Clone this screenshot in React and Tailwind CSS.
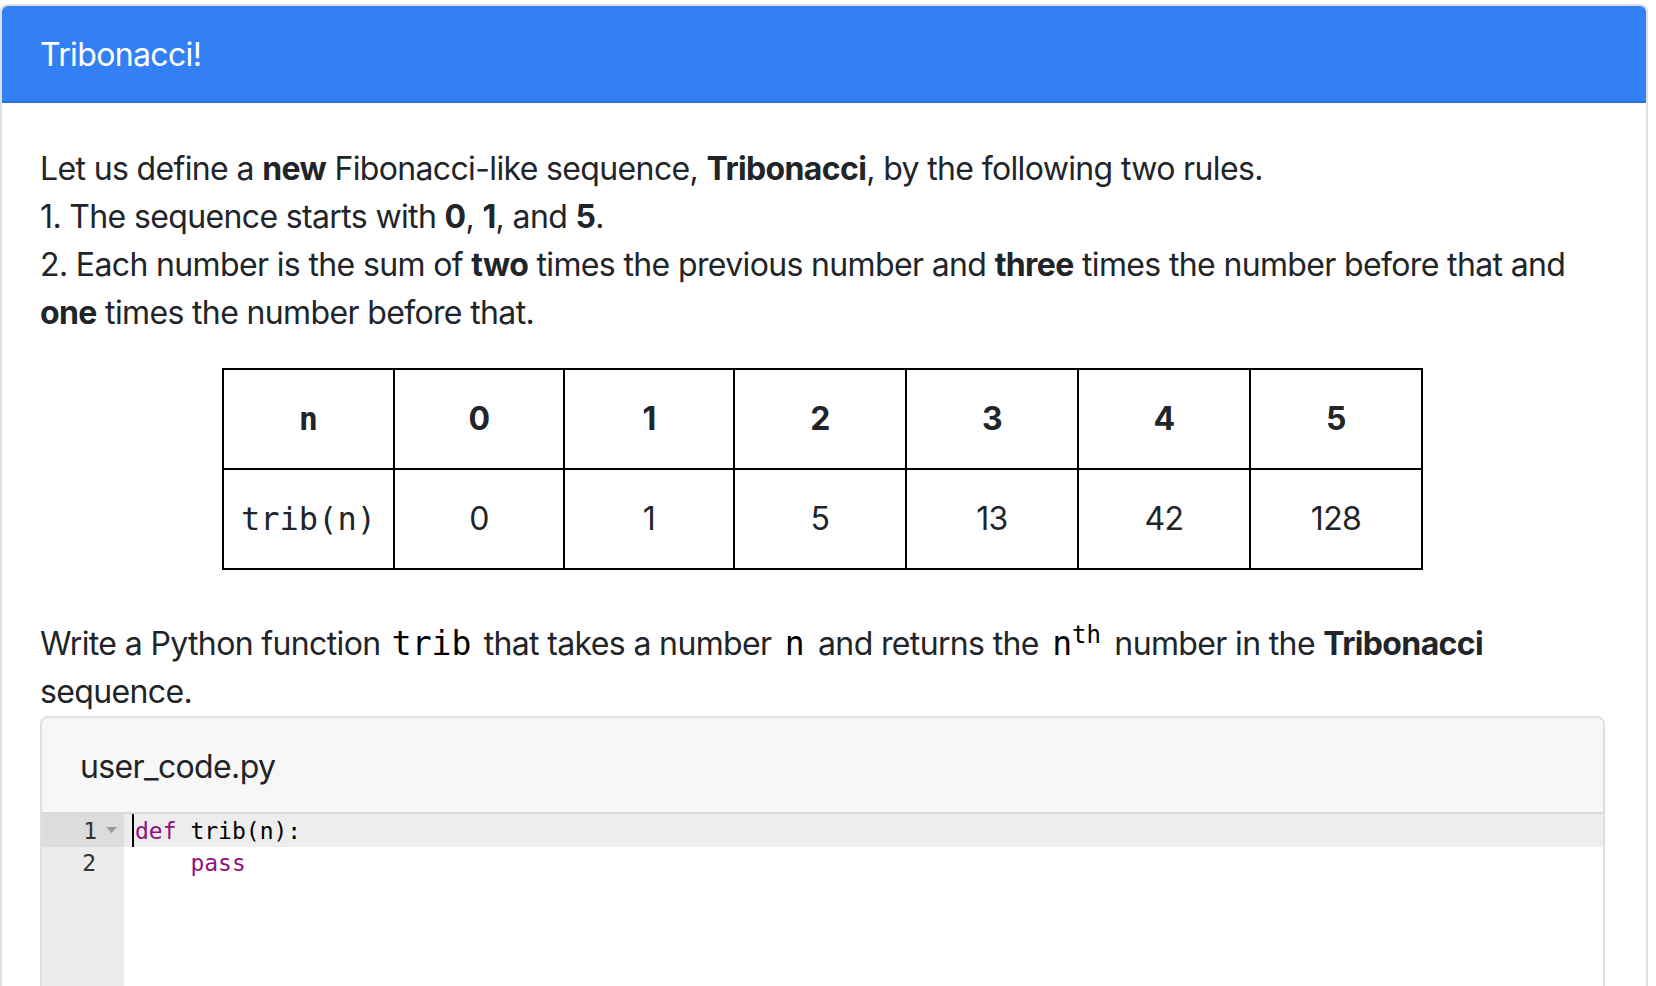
const SANS = { fontFamily: 'Inter, "Liberation Sans", sans-serif' }
const MONO = { fontFamily: '"DejaVu Sans Mono", monospace' }

const TRIB = [0, 1, 5, 13, 42, 128]
const COLS = [171, 170, 170, 172, 172, 172, 172]

function FoldArrow(){
  return (
    <svg width="11" height="7" viewBox="0 0 11 7" className="ml-[9px] mr-[7px]">
      <path d="M0 0 L11 0 L5.5 6 Z" fill="#9a9a9a" />
    </svg>
  )
}

function Code({ children, className = '' }){
  return <code className={`text-[33px] tracking-normal text-black ${className}`} style={MONO}>{children}</code>
}

export default function App(){
  return (
    <div className="pt-[4px] bg-white text-[#212529] tracking-[-0.64px]" style={SANS}>
      <div className="w-[1648px] border-2 border-[#dfdfdf] rounded-t-[8px] overflow-hidden">
        {/* card header */}
        <div className="h-[97px] bg-[#3380f5] border-b-2 border-[#2c6fd6] px-[38px] pt-[3px] flex items-center">
          <h1 className="text-[32px] leading-[48px] text-white font-normal">Tribonacci!</h1>
        </div>

        {/* card body */}
        <div className="pl-[38px] pr-[41px] pt-[42px] pb-[40px]">
          <p className="text-[32px] leading-[48px]">
            Let us define a <b>new</b> Fibonacci-like sequence, <b>Tribonacci</b>, by the following two rules.
            <br />
            1. The sequence starts with <b>0</b>, <b>1</b>, and <b>5</b>.
            <br />
            2. Each number is the sum of <b>two</b> times the previous number and <b>three</b> times the number before that and <b>one</b> times the number before that.
          </p>

          <table className="mx-auto mt-[31px] w-[1199px] table-fixed border-collapse text-[32px] text-center">
            <colgroup>
              {COLS.map((w, i) => <col key={i} style={{ width: w }} />)}
            </colgroup>
            <tbody>
              <tr className="h-[100px]">
                <th className="border-2 border-black font-bold tracking-normal" style={MONO}>n</th>
                {TRIB.map((_, i) => (
                  <th key={i} className="border-2 border-black font-bold">{i}</th>
                ))}
              </tr>
              <tr className="h-[100px]">
                <td className="border-2 border-black tracking-normal" style={MONO}>trib(n)</td>
                {TRIB.map((v, i) => (
                  <td key={i} className="border-2 border-black">{v}</td>
                ))}
              </tr>
            </tbody>
          </table>

          <p className="mt-[50px] text-[32px] leading-[48px]">
            Write a Python function <Code className="pl-[3px] pr-[4px]">trib</Code> that takes a number <Code className="px-[5px]">n</Code> and returns the <Code className="px-[5px]">n<sup className="text-[24px] leading-none">th</sup></Code> number in the <b>Tribonacci</b> sequence.
          </p>

          {/* editor */}
          <div className="border-2 border-[#dfdfdf] rounded-t-[8px] overflow-hidden">
            <div className="h-[96px] bg-[#f7f7f7] border-b-2 border-[#d9d9d9] px-[38px] pt-[4px] flex items-center">
              <span className="text-[32px] leading-[48px]">user_code.py</span>
            </div>
            <div className="flex h-[400px] text-[23px] leading-[32px] tracking-normal" style={MONO}>
              <div className="w-[82px] bg-[#ebebeb] text-[#333]">
                <div className="h-[33px] bg-[#dcdcdc] flex items-center justify-end">
                  <span>1</span>
                  <FoldArrow />
                </div>
                <div className="h-[32px] flex items-center justify-end pr-[28px]">
                  <span>2</span>
                </div>
              </div>
              <div className="flex-1">
                <div className="h-[33px] bg-[#ededed] flex items-center pl-[8px] whitespace-pre">
                  <span className="w-[2px] h-[33px] bg-black mr-[1px]" />
                  <span className="text-[#930f80]">def</span>
                  <span className="text-black"> trib(n):</span>
                </div>
                <div className="h-[32px] flex items-center pl-[11px] whitespace-pre">
                  <span>    </span>
                  <span className="text-[#930f80]">pass</span>
                </div>
              </div>
            </div>
          </div>
        </div>
      </div>
    </div>
  )
}
